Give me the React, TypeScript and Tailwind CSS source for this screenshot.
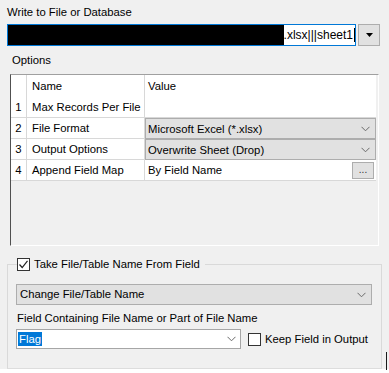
import React from "react";

const Chevron = () => (
  <svg width="9" height="6" viewBox="0 0 9 6" className="shrink-0">
    <polyline points="0.5,0.8 4.5,4.8 8.5,0.8" fill="none" stroke="#6a6a6a" strokeWidth="1" />
  </svg>
);

const CheckBox = ({ checked }: { checked?: boolean }) => (
  <div className="w-[13px] h-[13px] border border-[#333333] bg-white flex items-center justify-center shrink-0">
    {checked && (
      <svg width="11" height="11" viewBox="0 0 11 11">
        <polyline points="1.5,5.5 4.2,8.5 9.5,1.8" fill="none" stroke="#222222" strokeWidth="1.2" />
      </svg>
    )}
  </div>
);

const rows = [
  { n: "1", name: "Max Records Per File", value: "", kind: "text" },
  { n: "2", name: "File Format", value: "Microsoft Excel (*.xlsx)", kind: "combo" },
  { n: "3", name: "Output Options", value: "Overwrite Sheet (Drop)", kind: "combo" },
  { n: "4", name: "Append Field Map", value: "By Field Name", kind: "button" },
];

export default function App() {
  return (
    <div className="relative w-[389px] h-[373px] overflow-hidden bg-[#f0f0f0] text-[11.3px] text-black whitespace-nowrap font-['Liberation_Sans',Arial,sans-serif]">
      <div className="mt-[4px] h-[16px] leading-[16px] pl-[7px]">Write to File or Database</div>

      {/* file path row */}
      <div className="mt-[4px] flex h-[22px] pl-[7px]">
        <div className="flex w-[349px] h-full border border-[#0078d7] bg-white">
          <div className="w-[281px] h-full bg-black" />
          <div className="flex items-center leading-[20px] text-[12px]">
            <span>.xlsx|||sheet1</span>
            <span className="ml-[1px] w-[1px] h-[14px] bg-black" />
          </div>
        </div>
        <div className="ml-[2px] w-[22px] h-full bg-[#e1e1e1] border border-[#adadad] flex items-center justify-center">
          <svg width="7" height="4" viewBox="0 0 7 4">
            <polygon points="0,0 7,0 3.5,4" fill="#000" />
          </svg>
        </div>
      </div>

      <div className="mt-[6px] h-[16px] leading-[16px] pl-[12px]">Options</div>

      {/* options grid */}
      <div className="mt-[6px] ml-[10px] w-[369px] h-[172px] border-t border-l border-t-[#a0a0a0] border-l-[#505050] border-b border-r border-b-white border-r-white pr-[2px]">
        <div className="flex h-[22px] bg-white leading-[22px]">
          <div className="w-[16px] border-r border-[#d8d8d8]" />
          <div className="w-[118px] border-r border-[#d8d8d8] pl-[5px]">Name</div>
          <div className="flex-1 pl-[3px]">Value</div>
        </div>
        {rows.map((r) => (
          <div key={r.n} className="flex h-[21px] bg-white border-b border-[#d8d8d8] leading-[20px]">
            <div className="w-[16px] border-r border-[#d8d8d8] text-center">{r.n}</div>
            <div className="w-[118px] border-r border-[#d8d8d8] pl-[5px] overflow-hidden">{r.name}</div>
            {r.kind === "combo" ? (
              <div className="flex-1 flex items-center justify-between bg-[#e1e1e1] border border-[#adadad] pl-[2px] pr-[5px] -mb-[1px]">
                <span>{r.value}</span>
                <Chevron />
              </div>
            ) : r.kind === "button" ? (
              <div className="flex-1 flex items-center justify-between pl-[3px] pr-[2px]">
                <span>{r.value}</span>
                <div className="w-[22px] h-[17px] bg-[#e1e1e1] border border-[#adadad] flex items-center justify-center text-[10px] leading-[10px] text-[#333]">
                  ...
                </div>
              </div>
            ) : (
              <div className="flex-1 pl-[3px]">{r.value}</div>
            )}
          </div>
        ))}
      </div>

      {/* file name from field group */}
      <fieldset className="mt-[11px] ml-[7px] w-[375px] h-[112px] border border-[#d9d9d9] border-b-[#dddddd]">
        <legend className="ml-[9px] pr-[5px] flex items-center h-[14px]">
          <CheckBox checked />
          <span className="ml-[4px] leading-[14px]">Take File/Table Name From Field</span>
        </legend>
        <div className="mt-[13px] ml-[8px] w-[356px] h-[21px] flex items-center justify-between bg-[#e1e1e1] border border-[#adadad] pl-[3px] pr-[5px]">
          <span>Change File/Table Name</span>
          <Chevron />
        </div>
        <div className="mt-[5px] ml-[9px] h-[16px] leading-[16px]">Field Containing File Name or Part of File Name</div>
        <div className="mt-[3px] ml-[8px] flex items-center">
          <div className="w-[225px] h-[20px] flex items-center justify-between bg-white border border-[#a6a6a6] pl-[1px] pr-[4px]">
            <span className="bg-[#0078d7] text-white leading-[14px] px-[1px]">Flag</span>
            <Chevron />
          </div>
          <div className="ml-[7px]">
            <CheckBox />
          </div>
          <span className="ml-[4px]">Keep Field in Output</span>
        </div>
      </fieldset>

      <div className="h-[4px] bg-white" />

      <div className="absolute left-[386px] top-[352px] w-[1px] h-[18px] bg-[#1a1a1a]" />
    </div>
  );
}
